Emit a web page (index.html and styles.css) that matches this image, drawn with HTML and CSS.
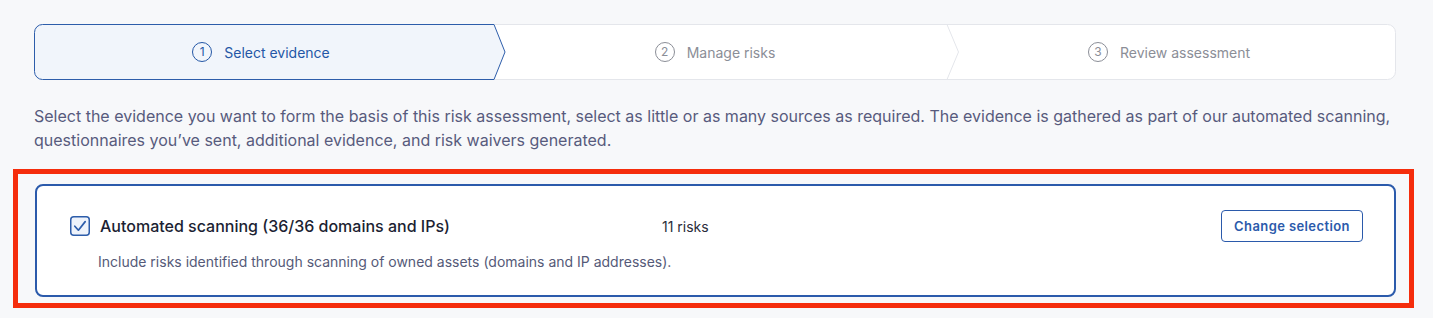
FILE: index.html
```html
<!DOCTYPE html>
<html lang="en">
<head>
<meta charset="utf-8">
<title>Select evidence</title>
<link rel="stylesheet" href="styles.css">
</head>
<body>
<div class="page">
  <div class="stepper">
    <svg class="stepper-bg" viewBox="0 0 1362 56" width="1362" height="56" aria-hidden="true">
      <path d="M454 0.5 H1353.5 A8 8 0 0 1 1361.5 8.5 V47.5 A8 8 0 0 1 1353.5 55.5 H454 Z" fill="#ffffff" stroke="#e4e6eb" stroke-width="1"/>
      <path d="M913 0.5 L924.5 28 L913 55.5" fill="none" stroke="#e4e6eb" stroke-width="1"/>
      <path d="M8.5 0.5 H460 L471 28 L460 55.5 H8.5 A8 8 0 0 1 0.5 47.5 V8.5 A8 8 0 0 1 8.5 0.5 Z" fill="#f1f5fb" stroke="#2d5daa" stroke-width="1" stroke-linejoin="round"/>
    </svg>
    <div class="step step-active"><span class="step-num">1</span><span class="step-label">Select evidence</span></div>
    <div class="step"><span class="step-num">2</span><span class="step-label">Manage risks</span></div>
    <div class="step"><span class="step-num">3</span><span class="step-label">Review assessment</span></div>
  </div>

  <p class="intro">Select the evidence you want to form the basis of this risk assessment, select as little or as many sources as required. The evidence is gathered as part of our automated scanning, questionnaires you’ve sent, additional evidence, and risk waivers generated.</p>

  <div class="highlight">
    <div class="card">
      <div class="card-row">
        <span class="checkbox">
          <svg viewBox="0 0 20 20" width="20" height="20" aria-hidden="true">
            <rect x="0.75" y="0.75" width="18.5" height="18.5" rx="3" fill="#eef3fb" stroke="#2d5daa" stroke-width="1.5"/>
            <path d="M4.8 10.2 L8.4 14.2 L15.2 5.6" fill="none" stroke="#2d5daa" stroke-width="1.7" stroke-linecap="round" stroke-linejoin="round"/>
          </svg>
        </span>
        <span class="card-title">Automated scanning (36/36 domains and IPs)</span>
        <span class="card-count">11 risks</span>
        <button class="btn" type="button">Change selection</button>
      </div>
      <p class="card-desc">Include risks identified through scanning of owned assets (domains and IP addresses).</p>
    </div>
  </div>
</div>
</body>
</html>
```

FILE: styles.css
```css
html, body {
  margin: 0;
  padding: 0;
}
body {
  background: #f7f8fa;
  font-family: Inter, "Noto Sans", "Liberation Sans", sans-serif;
  color: #1c1f33;
}
.page {
  padding: 24px 37px 10px 34px;
}
.stepper {
  position: relative;
  display: flex;
  height: 56px;
}
.stepper-bg {
  position: absolute;
  left: 0;
  top: 0;
  width: 1362px;
  height: 56px;
}
.step {
  position: relative;
  flex: 1 1 0;
  display: flex;
  align-items: center;
  justify-content: center;
  gap: 12px;
  font-size: 14px;
  color: #8b8e97;
}
.step-num {
  box-sizing: border-box;
  width: 20px;
  height: 20px;
  border: 1.2px solid #8b8e97;
  border-radius: 50%;
  display: flex;
  align-items: center;
  justify-content: center;
  font-size: 12px;
  line-height: 1;
}
.step-active {
  color: #2457a6;
}
.step-active .step-num {
  border-color: #2457a6;
}
.intro {
  margin: 24px 0 0 0;
  font-size: 16px;
  line-height: 24px;
  color: #575b7d;
}
.highlight {
  margin: 17px -18px 0 -21px;
  border: 5px solid #f52d0c;
  padding: 10px 13px 6px 17px;
}
.card {
  background: #ffffff;
  border: 2px solid #2b5aab;
  border-radius: 8px;
  padding: 24px 31px 23px 32px;
}
.card-row {
  display: flex;
  align-items: center;
  height: 32px;
}
.checkbox {
  display: flex;
  width: 20px;
  height: 20px;
  margin-left: 1px;
  margin-right: 10px;
}
.card-title {
  width: 562px;
  font-size: 16px;
  font-weight: 500;
  color: #1c1f33;
}
.card-count {
  font-size: 14px;
  color: #2a2c3a;
}
.btn {
  margin-left: auto;
  box-sizing: border-box;
  width: 142px;
  height: 32px;
  background: #ffffff;
  border: 1px solid #2b5aab;
  border-radius: 4px;
  color: #2b5aab;
  font-family: Inter, "Noto Sans", "Liberation Sans", sans-serif;
  font-size: 13px;
  font-weight: 600;
  letter-spacing: 0.4px;
  padding: 0;
}
.card-desc {
  margin: 10px 0 0 29px;
  font-size: 14px;
  line-height: 20px;
  color: #555a78;
}
```
